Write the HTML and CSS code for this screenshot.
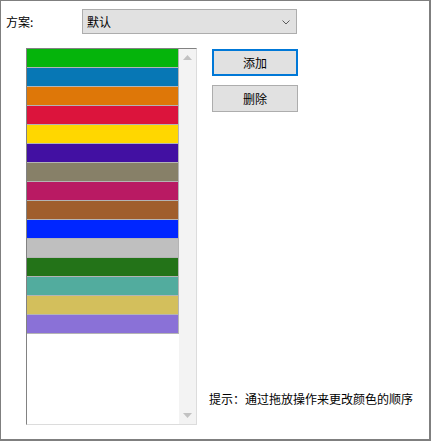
FILE: index.html
```html
<!DOCTYPE html>
<html lang="zh-CN">
<head>
<meta charset="utf-8">
<title>颜色方案</title>
<link rel="stylesheet" href="styles.css">
</head>
<body>
<div class="window">
  <div class="scheme-row">
    <span class="label">方案:</span>
    <div class="select">
      <span class="select-text">默认</span>
      <svg class="chevron" width="8" height="5" viewBox="0 0 8 5"><polyline points="0.5,0.5 4,4 7.5,0.5" fill="none" stroke="#5a5a5a" stroke-width="1"/></svg>
    </div>
  </div>
  <div class="main">
    <div class="listbox">
      <div class="items">
        <div class="item c1"></div>
        <div class="item c2"></div>
        <div class="item c3"></div>
        <div class="item c4"></div>
        <div class="item c5"></div>
        <div class="item c6"></div>
        <div class="item c7"></div>
        <div class="item c8"></div>
        <div class="item c9"></div>
        <div class="item c10"></div>
        <div class="item c11"></div>
        <div class="item c12"></div>
        <div class="item c13"></div>
        <div class="item c14"></div>
        <div class="item c15"></div>
      </div>
      <div class="scrollbar">
        <div class="arrow-btn"><svg width="9" height="5" viewBox="0 0 9 5"><polygon points="0,5 4.5,0 9,5" fill="#c2c2c2"/></svg></div>
        <div class="arrow-btn"><svg width="9" height="5" viewBox="0 0 9 5"><polygon points="0,0 9,0 4.5,5" fill="#c2c2c2"/></svg></div>
      </div>
    </div>
    <div class="side">
      <div class="buttons">
        <button class="btn primary">添加</button>
        <button class="btn">删除</button>
      </div>
      <div class="hint">提示：通过拖放操作来更改颜色的顺序</div>
    </div>
  </div>
</div>
</body>
</html>
```
FILE: styles.css
```css
html, body {
  margin: 0;
  padding: 0;
  background: #ffffff;
}
body {
  font-family: "Noto Sans CJK SC", "Noto Sans", sans-serif;
  font-size: 12px;
  color: #000;
}
.window {
  box-sizing: border-box;
  width: 431px;
  height: 441px;
  border-left: 1px solid #7f7f7f;
  border-top: 1px solid #7f7f7f;
  border-right: 2px solid #7f7f7f;
  border-bottom: 2px solid #7f7f7f;
  background: #fff;
}
.scheme-row {
  display: flex;
  align-items: center;
  padding: 8px 0 0 5px;
}
.label {
  width: 76px;
  line-height: 16px;
}
.select {
  box-sizing: border-box;
  width: 215px;
  height: 25px;
  border: 1px solid #adadad;
  background: #e1e1e1;
  display: flex;
  align-items: center;
  justify-content: space-between;
  padding: 0 6px 0 4px;
}
.select-text {
  line-height: 16px;
}
.chevron {
  display: block;
  margin-top: 1px;
}
.main {
  display: flex;
  margin-top: 14px;
  padding-left: 25px;
}
.listbox {
  box-sizing: border-box;
  width: 171px;
  height: 377px;
  display: flex;
  border-left: 1px solid #828282;
  border-top: 1px solid #828282;
  border-right: 1px solid #dcdcdc;
  border-bottom: 1px solid #dcdcdc;
  background: #fff;
}
.items {
  width: 152px;
  display: flex;
  flex-direction: column;
}
.item {
  box-sizing: border-box;
  height: 19px;
  border-right: 1px solid #b4b4b4;
  border-bottom: 1px solid #b4b4b4;
}
.c1 { background: #05b40b; }
.c2 { background: #0777b5; }
.c3 { background: #de7708; }
.c4 { background: #dc143c; }
.c5 { background: #ffd700; }
.c6 { background: #4210a2; }
.c7 { background: #878068; }
.c8 { background: #b91a63; }
.c9 { background: #a05e2c; }
.c10 { background: #0026ff; }
.c11 { background: #bfbfbf; }
.c12 { background: #237318; }
.c13 { background: #52ac9e; }
.c14 { background: #d3bf5c; }
.c15 { background: #8a71d7; }
.scrollbar {
  width: 17px;
  background: #f3f3f3;
  display: flex;
  flex-direction: column;
  justify-content: space-between;
}
.arrow-btn {
  height: 17px;
  display: flex;
  align-items: center;
  justify-content: center;
}
.arrow-btn svg {
  display: block;
}
.side {
  margin-left: 12px;
  display: flex;
  flex-direction: column;
  justify-content: space-between;
}
.buttons {
  display: flex;
  flex-direction: column;
  gap: 9px;
  margin: 1px 0 0 3px;
}
.btn {
  box-sizing: border-box;
  width: 86px;
  height: 27px;
  border: 1px solid #adadad;
  background: #e1e1e1;
  font-family: "Noto Sans CJK SC", "Noto Sans", sans-serif;
  font-size: 12px;
  color: #000;
  padding: 0;
  margin: 0;
}
.btn.primary {
  border: 2px solid #0078d7;
}
.hint {
  line-height: 16px;
  margin-bottom: 18px;
  white-space: nowrap;
}
```
